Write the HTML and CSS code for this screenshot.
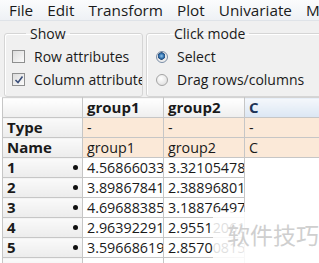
FILE: index.html
```html
<!DOCTYPE html>
<html lang="en">
  <head>
    <meta charset="UTF-8" />
    <meta name="viewport" content="width=device-width, initial-scale=1.0" />
    <title>Data table</title>
    <link rel="stylesheet" href="styles.css">
  </head>
  <body>
    <nav class="Menu">
      <span>File</span>
      <span>Edit</span>
      <span>Transform</span>
      <span>Plot</span>
      <span>Univariate</span>
      <span>M</span>
    </nav>
    <div class="Options">
      <fieldset class="Group GroupShow">
        <legend>Show</legend>
        <label class="Option">
          <span class="Check"></span>
          <span>Row attributes</span>
        </label>
        <label class="Option">
          <span class="Check is-checked">
            <svg width="10" height="10" viewBox="0 0 10 10"><path d="M1.5 5 L4 7.5 L8.5 1.5" fill="none" stroke="#3b4f7a" stroke-width="1.6"/></svg>
          </span>
          <span>Column attributes</span>
        </label>
      </fieldset>
      <fieldset class="Group GroupMode">
        <legend>Click mode</legend>
        <label class="Option">
          <span class="Radio is-checked"></span>
          <span>Select</span>
        </label>
        <label class="Option">
          <span class="Radio"></span>
          <span>Drag rows/columns</span>
        </label>
      </fieldset>
    </div>
    <table class="Sheet">
      <colgroup>
        <col class="ColHead" />
        <col class="ColData" />
        <col class="ColData" />
        <col />
      </colgroup>
      <tr class="HeadRow">
        <th class="Corner"></th>
        <th>group1</th>
        <th>group2</th>
        <th class="is-selected">C</th>
      </tr>
      <tr class="AttrRow">
        <th>Type</th>
        <td>-</td>
        <td>-</td>
        <td>-</td>
      </tr>
      <tr class="AttrRow">
        <th>Name</th>
        <td>group1</td>
        <td>group2</td>
        <td>C</td>
      </tr>
      <tr>
        <th>1<i></i></th>
        <td>4.56866033</td>
        <td>3.32105478</td>
        <td class="Empty"></td>
      </tr>
      <tr>
        <th>2<i></i></th>
        <td>3.89867841</td>
        <td>2.38896801</td>
        <td class="Empty"></td>
      </tr>
      <tr>
        <th>3<i></i></th>
        <td>4.69688385</td>
        <td>3.18876497</td>
        <td class="Empty"></td>
      </tr>
      <tr>
        <th>4<i></i></th>
        <td>2.96392291</td>
        <td>2.95512061</td>
        <td class="Empty"></td>
      </tr>
      <tr>
        <th>5<i></i></th>
        <td>3.59668619</td>
        <td>2.85700815</td>
        <td class="Empty"></td>
      </tr>
      <tr>
        <th></th>
        <td></td>
        <td></td>
        <td class="Empty"></td>
      </tr>
    </table>
    <div class="Watermark">软件技巧</div>
  </body>
</html>
```

FILE: styles.css
```css
:root {
  --color-text: #1a1a1a;
  --color-panel: #f0f0f0;
  --color-grid: #c6c6c6;
  --color-attr: #fbe9d8;
}

body {
  margin: 0;
  width: 319px;
  height: 263px;
  overflow: hidden;
  position: relative;
  font-family: "Open Sans", sans-serif;
  font-size: 14px;
  color: var(--color-text);
  background-color: #fff;
}

.Menu {
  display: flex;
  height: 20px;
  padding-left: 9px;
  gap: 14px;
  align-items: center;
  white-space: nowrap;
  background: linear-gradient(#fbfcfd, #eef1f5);
  border-bottom: 1px solid #dfe3e8;
  font-size: 15.3px;
}

.Options {
  display: flex;
  height: 73px;
  padding: 3px 0 0 4px;
  gap: 3px;
  background-color: var(--color-panel);
  overflow: hidden;
  white-space: nowrap;
}

.Group {
  margin: 0;
  padding: 2px 0 0 7px;
  border: 1px solid #d5d5d5;
  border-radius: 3px;
  box-shadow: inset 1px 1px 0 #fff;
  min-width: 0;
  overflow: hidden;
}

.Group legend {
  padding: 0 4px;
  margin-left: 14px;
  font-size: 14px;
}

.GroupShow {
  width: 130px;
  flex: none;
}

.GroupMode {
  flex: 1;
  margin-right: -20px;
  padding-left: 9px;
}

.Option {
  display: flex;
  align-items: center;
  gap: 9px;
  height: 23px;
  font-size: 14px;
}

.Check {
  flex: none;
  width: 11px;
  height: 11px;
  border: 1px solid #8e8f8f;
  background: linear-gradient(135deg, #dcdcdc, #fbfbfb);
  display: flex;
  align-items: center;
  justify-content: center;
}

.Radio {
  flex: none;
  width: 10px;
  height: 10px;
  border: 1px solid #a4a4a4;
  border-radius: 50%;
  background: radial-gradient(circle at 40% 35%, #fff, #d8d8d8);
}

.Radio.is-checked {
  background: radial-gradient(circle at 45% 40%, #8fc6ee 0, #2c6aa8 2.5px, #2b4f7a 3.5px, #e9e9e9 4px, #f6f6f6);
  border-color: #7a8da6;
}

.Sheet {
  margin-left: 2px;
  border-collapse: collapse;
  table-layout: fixed;
  width: 330px;
  white-space: nowrap;
}

.ColHead {
  width: 80px;
}

.ColData {
  width: 81px;
}

.Sheet th,
.Sheet td {
  height: 19px;
  padding: 0 0 0 4px;
  border: 1px solid var(--color-grid);
  overflow: hidden;
  text-align: left;
  font-size: 14.3px;
  line-height: 19px;
}

.Sheet th {
  font-weight: bold;
  font-size: 15px;
  background: linear-gradient(#fafafa, #ececec);
}

.HeadRow th {
  background: linear-gradient(#ffffff, #eeeeee);
  border-top-color: #d3d3d3;
}

.HeadRow th.is-selected {
  color: #1e3356;
  background: linear-gradient(#f5f8fc, #dbe6f3);
}

.Sheet tr > th:not(.Corner) {
  position: relative;
}

.Sheet th i {
  position: absolute;
  right: 4px;
  top: 7px;
  width: 5px;
  height: 5px;
  border-radius: 50%;
  background-color: #111;
}

.AttrRow td {
  background-color: var(--color-attr);
}

.Sheet td.Empty {
  border-color: transparent;
  border-left-color: var(--color-grid);
}

.Watermark {
  position: absolute;
  left: 213px;
  top: 212px;
  width: 110px;
  height: 52px;
  padding: 5px 0 0 14px;
  box-sizing: border-box;
  background: linear-gradient(90deg, rgba(255, 255, 255, 0.85), rgba(255, 255, 255, 0.95));
  font-family: "Noto Sans CJK SC", sans-serif;
  font-size: 23px;
  color: #cfcfcf;
  letter-spacing: 0;
}
```
